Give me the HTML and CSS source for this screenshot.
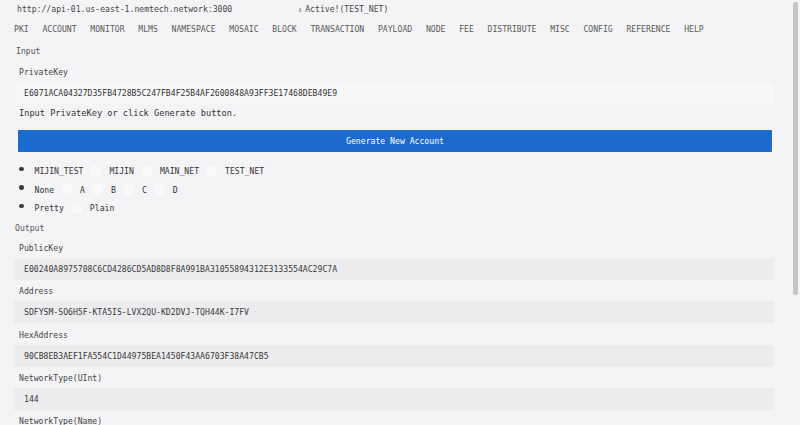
FILE: index.html
```html
<!DOCTYPE html>
<html lang="en">
<head>
<meta charset="utf-8">
<title>PKI - Account</title>
<link rel="stylesheet" href="styles.css">
</head>
<body>
<header class="topbar">
  <span class="endpoint">http://api-01.us-east-1.nemtech.network:3000</span>
  <span class="status"><span class="arrows">⇕</span>Active!(TEST_NET)</span>
</header>
<nav class="nav">
  <a>PKI</a><a>ACCOUNT</a><a>MONITOR</a><a>MLMS</a><a>NAMESPACE</a><a>MOSAIC</a><a>BLOCK</a><a>TRANSACTION</a><a>PAYLOAD</a><a>NODE</a><a>FEE</a><a>DISTRIBUTE</a><a>MISC</a><a>CONFIG</a><a>REFERENCE</a><a>HELP</a>
</nav>
<main class="content">
  <div class="section-title">Input</div>
  <div class="label">PrivateKey</div>
  <div class="input-box">E6071ACA04327D35FB4728B5C247FB4F25B4AF2600848A93FF3E17468DEB49E9</div>
  <div class="hint">Input PrivateKey or click Generate button.</div>
  <button class="btn">Generate New Account</button>
  <div class="radios">
    <div class="radio-row">
      <span class="radio checked"></span><span class="opt">MIJIN_TEST</span>
      <span class="radio"></span><span class="opt">MIJIN</span>
      <span class="radio"></span><span class="opt">MAIN_NET</span>
      <span class="radio"></span><span class="opt">TEST_NET</span>
    </div>
    <div class="radio-row">
      <span class="radio checked"></span><span class="opt">None</span>
      <span class="radio"></span><span class="opt">A</span>
      <span class="radio"></span><span class="opt">B</span>
      <span class="radio"></span><span class="opt">C</span>
      <span class="radio"></span><span class="opt">D</span>
    </div>
    <div class="radio-row">
      <span class="radio checked"></span><span class="opt">Pretty</span>
      <span class="radio"></span><span class="opt">Plain</span>
    </div>
  </div>
  <div class="section-title out">Output</div>
  <div class="field">
    <div class="label">PublicKey</div>
    <div class="value">E00240A8975708C6CD4286CD5AD8D8F8A991BA31055894312E3133554AC29C7A</div>
  </div>
  <div class="field">
    <div class="label">Address</div>
    <div class="value">SDFYSM-SO6H5F-KTA5IS-LVX2QU-KD2DVJ-TQH44K-I7FV</div>
  </div>
  <div class="field">
    <div class="label">HexAddress</div>
    <div class="value">90CB8EB3AEF1FA554C1D44975BEA1450F43AA6703F38A47CB5</div>
  </div>
  <div class="field">
    <div class="label">NetworkType(UInt)</div>
    <div class="value">144</div>
  </div>
  <div class="field">
    <div class="label">NetworkType(Name)</div>
    <div class="value">TEST_NET</div>
  </div>
</main>
<div class="scroll-thumb"></div>
</body>
</html>
```
FILE: styles.css
```css
html, body {
  margin: 0;
  padding: 0;
  overflow: hidden;
  height: 100%;
}
body {
  background: #f4f4f6;
  font-family: "DejaVu Sans Mono", "Liberation Mono", monospace;
  font-size: 8.15px;
  color: #3c3c3c;
}
.topbar {
  display: flex;
  height: 20px;
  line-height: 19px;
  padding-left: 17px;
  color: #444;
}
.endpoint {
  width: 281px;
}
.arrows {
  font-size: 7px;
  margin-right: 3px;
  color: #555;
}
.nav {
  display: flex;
  height: 21px;
  line-height: 19px;
  padding-left: 14px;
  gap: 13.7px;
  color: #5a5a5a;
}
.content {
  padding: 0 26px 0 14px;
}
.section-title {
  height: 21px;
  line-height: 21px;
  padding-left: 2px;
  color: #555;
}
.section-title.out {
  height: 20.5px;
  line-height: 21.5px;
  padding-left: 1px;
}
.label {
  height: 20px;
  line-height: 20px;
  padding-left: 5px;
  color: #444;
}
.input-box {
  margin: 1px 0 0 2px;
  height: 20px;
  line-height: 20px;
  padding-left: 8px;
  background: #f8f8f9;
  color: #333;
}
.hint {
  height: 20px;
  line-height: 20px;
  padding-left: 5px;
  font-size: 8.65px;
  color: #333;
}
.btn {
  display: block;
  margin: 7px 0 0 4px;
  width: 754px;
  height: 22px;
  border: none;
  border-radius: 1px;
  background: #1a6bcd;
  color: #fff;
  font-family: inherit;
  font-size: 8.15px;
  padding: 0;
}
.radios {
  margin-top: 10px;
  padding-left: 1.5px;
}
.radio-row {
  display: flex;
  align-items: center;
  height: 18.5px;
}
.radio {
  position: relative;
  width: 11px;
  height: 11px;
  margin-right: 8px;
  box-sizing: border-box;
  border-radius: 50%;
  border: 1px solid #fdfdfd;
  background: #f9f9fa;
}
.radio.checked {
  border-color: transparent;
  background: transparent;
}
.radio.checked::after {
  content: "";
  position: absolute;
  left: 2.5px;
  top: 0;
  width: 4.5px;
  height: 4.5px;
  border-radius: 50%;
  background: #334233;
}
.opt {
  margin-right: 7px;
  color: #333;
}
.field .label {
  padding-left: 5px;
}
.value {
  height: 22px;
  line-height: 22px;
  padding-left: 10px;
  margin-bottom: 1.3px;
  background: #ececee;
  color: #3a3a3a;
}
.scroll-thumb {
  position: fixed;
  right: 2px;
  top: 2px;
  width: 5px;
  height: 293px;
  border-radius: 2px;
  background: #c6c6c6;
}
```
